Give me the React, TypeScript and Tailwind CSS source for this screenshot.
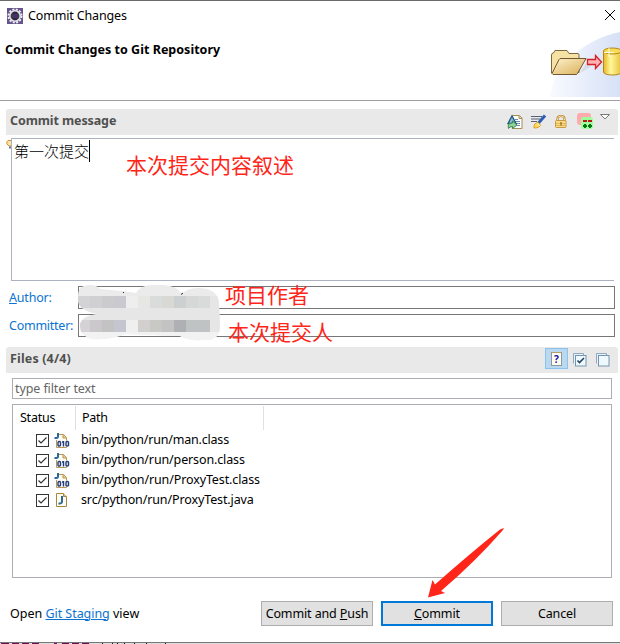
import React from 'react';

const ui = "font-['Noto_Sans','Noto_Sans_CJK_SC',sans-serif]";
const cjk = "font-['Noto_Sans_CJK_SC',sans-serif] font-light";
const note = "font-['Noto_Sans_CJK_SC',sans-serif] text-[21px] leading-[30px] text-[#ff2518]";

function Gear() {
  return (
    <svg width="16" height="16" viewBox="0 0 16 16">
      <rect width="16" height="16" fill="#65548c" />
      <circle cx="8" cy="8" r="6.5" fill="none" stroke="#eee" strokeWidth="2" strokeDasharray="2 1.4" />
      <circle cx="8" cy="8" r="5.2" fill="#302747" stroke="#e4e4e4" strokeWidth="1.6" />
      <path d="M4 7h8M4 9h8" stroke="#55496e" />
    </svg>
  );
}

function Banner() {
  return (
    <svg className="block" width="70" height="66" viewBox="550 31 70 66">
      <defs>
        <linearGradient id="sky" x1="0" y1="0" x2="1" y2="0"><stop stopColor="#f8faff" /><stop offset="1" stopColor="#d7e1f6" /></linearGradient>
        <linearGradient id="fold" x1="0" y1="0" x2="1" y2="1"><stop stopColor="#fff3cc" /><stop offset="1" stopColor="#d9ae59" /></linearGradient>
        <linearGradient id="cyl" x1="0" y1="0" x2="1" y2="0"><stop stopColor="#e9b824" /><stop offset=".4" stopColor="#fff79b" /><stop offset="1" stopColor="#e8c23a" /></linearGradient>
      </defs>
      <path d="M550 97C554 66 584 39 620 32V97Z" fill="url(#sky)" />
      <path d="M580 73l6-10 7-1q-2 6-13 11Z" fill="#d9dce6" />
      <path d="M551.5 73V55q0-2 2-2l1.500-2.500h12l2 3h9q1 0 1 2v17Z" fill="#f6e2a5" stroke="#7d6840" />
      <path d="M552 73.500L559 59.500q.5-1 2-1h25l-8.500 15q-.5 1-1.500 1h-23Z" fill="url(#fold)" stroke="#73572f" />
      <path d="M587.500 59.500h8v-4l6 6.500-6 6.500v-4h-8Z" fill="#ffb2b2" stroke="#d61f26" strokeWidth="1.300" />
      <path d="M603.500 51v21c0 4 18 4 18 0V51Z" fill="url(#cyl)" stroke="#b68516" />
      <ellipse cx="612.500" cy="51" rx="9" ry="3" fill="#f6dd55" stroke="#b68516" />
      <path d="M609 48v9M604 52.500h10" stroke="#fffde0" />
    </svg>
  );
}

function Amend() {
  return (
    <svg width="16" height="16" viewBox="0 0 16 16">
      <path d="M5.500 1.500h7l2.500 2.500v10.500h-9.500Z" fill="#fff" stroke="#a68d55" />
      <path d="M12 1.500v3h3" fill="#ead9a6" stroke="#a68d55" />
      <path d="M8 5.500h3M8 7.500h5M8 9.500h5M9 11.500h4" stroke="#668bb5" />
      <path d="M1 9.500L5 2l4 7.500Z" fill="#8fb9cf" stroke="#235b87" strokeWidth="1.400" />
      <path d="M1.500 14.500q-1.500-5.500 4-5.500V7L10 11l-4.500 3.500v-2q-3 0-4 2Z" fill="#92d39a" stroke="#3b8a50" />
    </svg>
  );
}
function SignOff() {
  return (
    <svg width="16" height="16" viewBox="0 0 16 16">
      <path d="M1 2.500h11M1 5h9M1 7.500h6" stroke="#566077" />
      <path d="M8.500 9L15 1.500" stroke="#2f5fb5" strokeWidth="3" />
      <path d="M4 14q-.5-5 4-5.500l2.500 2.500q-1 3-6.500 3Z" fill="#ffd957" stroke="#df9e22" />
      <path d="M7 9l3 3" stroke="#fff6c9" />
    </svg>
  );
}
function Lock() {
  return (
    <svg width="16" height="16" viewBox="0 0 16 16">
      <path d="M4.500 7V5q0-3 3.500-3t3.500 3v2" fill="none" stroke="#b58131" strokeWidth="2.200" />
      <path d="M4.500 7V5q0-3 3.500-3t3.500 3v2" fill="none" stroke="#f5dc91" strokeWidth="1" />
      <rect x="2.500" y="6.500" width="10.500" height="7" rx="1" fill="#fbdc85" stroke="#c79947" />
      <path d="M3 9.500h10M3 11.500h10" stroke="#e3b850" /><path d="M8 8v3.500" stroke="#70501c" />
    </svg>
  );
}
function ChangeId() {
  return (
    <svg width="18" height="18" viewBox="0 0 18 18">
      <rect x="1" y="0" width="14" height="12" rx="3" fill="#ffaaad" />
      <rect x="5" y="4" width="12" height="12" rx="3" fill="#9cff9b" />
      <path d="M7 8h4M12 8h4" stroke="#b81818" strokeWidth="2" />
      <path d="M7 13h4M12 13h4M9 11v4M14 11v4" stroke="#087411" strokeWidth="2" />
    </svg>
  );
}

function Check() {
  return (
    <svg className="block" width="13" height="13" viewBox="0 0 13 13">
      <rect x=".5" y=".5" width="12" height="12" fill="#fff" stroke="#333" />
      <path d="M2.500 6.500l2.500 2.500 5.500-5.500" fill="none" stroke="#333" strokeWidth="1.200" />
    </svg>
  );
}

function FileIcon({ java }: { java?: boolean }) {
  return java ? (
    <svg className="block" width="16" height="16" viewBox="0 0 16 16">
      <path d="M2.500 .5h7l3 3v10h-10Z" fill="#fffdf0" stroke="#a98742" /><path d="M9.500 .5v3h3" fill="#e6cd8a" stroke="#a98742" />
      <path d="M8 3v5.500q0 2.500-3.500 2" fill="none" stroke="#28699c" strokeWidth="2" />
    </svg>
  ) : (
    <svg className="block" width="16" height="16" viewBox="0 0 16 16">
      <path d="M4 1.500h5.500l3 3V14.500h-10V7" fill="#fffdf0" stroke="#b8965a" /><path d="M9 1.500v3.500h3.500" fill="#e6cd8a" stroke="#b8965a" />
      <path d="M4 0v3.500q0 2-3.500 1.500" fill="none" stroke="#28699c" strokeWidth="2" />
      <path d="M3.500 7.500H16v6H3.500Z" fill="#f3f5fa" />
      <rect x="4" y="8.500" width="2.500" height="4.500" rx="1" fill="none" stroke="#263e76" strokeWidth="1.400" />
      <path d="M8 9h1.500M9.500 8v5.500" fill="none" stroke="#263e76" strokeWidth="1.400" />
      <rect x="12" y="8.500" width="2.500" height="4.500" rx="1" fill="none" stroke="#263e76" strokeWidth="1.400" />
    </svg>
  );
}

function Boxes({ checked }: { checked?: boolean }) {
  return (
    <svg className="block" width="14" height="14" viewBox="0 0 14 14">
      <path d="M.5 10.500V.5h10v2" fill="none" stroke="#91a8bd" /><path d="M1 1h9v1H2v8H1Z" fill="#e5f5ff" />
      <rect x="2.500" y="2.500" width="10.500" height="10.500" fill="#edf9ff" stroke="#7894ab" />
      {checked && <path d="M4.500 7.500l2 2L11 5" fill="none" stroke="#234568" strokeWidth="1.600" />}
    </svg>
  );
}

function Redaction() {
  const top = ['#d3d2d4', '#d0cfd1', '#cbcacd', '#c9c9cf', '#eeeeee', '#e6e7e4', '#dadbdb', '#d8d9d4', '#cdd0d1', '#d6d8d8', '#d9dbda', '#e6e6e6'];
  const low = ['#d4d2d4', '#cac8ca', '#c4c3c3', '#c5c5cf', '#efefef', '#d1d0ce', '#c8c8c5', '#c3c3c3', '#aeb0b3', '#c0c3c4', '#bfc3c3', '#e6e6e6'];
  return (
    <svg className="block" width="144" height="60" viewBox="77 284 144 60">
      <defs><clipPath id="smudge"><path d="M78 296Q78 285 90 285Q97 285 100 289L122 291L136 293Q141 285 152 285H164Q177 286 182 294Q187 288 198 288Q219 288 219 305L220 326Q220 341 204 340Q188 341 180 336L125 334Q112 340 92 339Q80 336 80 326Q80 316 98 314Q78 310 78 300Z" /></clipPath></defs>
      <g clipPath="url(#smudge)">
        <rect x="77" y="284" width="144" height="60" fill="#ebebeb" />
        <rect x="77" y="308" width="144" height="12" fill="#e6e6e6" />
        <rect x="77" y="332" width="144" height="12" fill="#f2f2f2" />
        {top.map((c, i) => <rect key={i} x={78 + i * 12} y="296" width="12" height="12" fill={c} />)}
        {low.map((c, i) => <rect key={i} x={78 + i * 12} y="320" width="12" height="12" fill={c} />)}
      </g>
      <path d="M181 294.500l2-1.500M123 292.500h1" stroke="#222" />
    </svg>
  );
}

const files = [
  ['bin/python/run/man.class', 'tracking-[-0.19px]'],
  ['bin/python/run/person.class', 'tracking-[-0.13px]'],
  ['bin/python/run/ProxyTest.class', 'tracking-[-0.12px]'],
  ['src/python/run/ProxyTest.java', 'tracking-[-0.12px]'],
];

export default function App() {
  return (
    <div className={`relative flex h-[644px] w-[620px] flex-col overflow-hidden bg-white text-[12.5px] leading-[20px] text-black ${ui}`}>
      <header className="h-[101px] shrink-0 border-y border-t-[#6b6b6b] border-b-[#a0a0a0]">
        <div className="flex h-[30px] items-center pl-[7px] pr-[5px]">
          <Gear />
          <span className="ml-[5px] tracking-[-0.15px]">Commit Changes</span>
          <svg className="-mt-[2px] ml-auto" width="10" height="10" viewBox="0 0 10 10"><path d="M0 0L10 10M10 0L0 10" stroke="#000" /></svg>
        </div>
        <div className="flex justify-between pl-[5px]">
          <h1 className="mt-[9px] font-bold tracking-[0.02px]">Commit Changes to Git Repository</h1>
          <Banner />
        </div>
      </header>

      <div className="ml-[6px] mr-[2px] mt-[8px] flex h-[26px] shrink-0 items-center rounded-t-[3px] bg-[#e9e9e9] pl-[4px] pr-[8px]">
        <h2 className="-mt-[2px] font-bold tracking-[-0.1px] text-[#505050]">Commit message</h2>
        <div className="ml-auto flex items-center gap-[7px]">
          <Amend /><SignOff /><Lock /><ChangeId />
          <svg className="-ml-px -mt-[11px]" width="10" height="6" viewBox="0 0 10 6"><path d="M.5 .5h9L5 5Z" fill="#fff" stroke="#777" /></svg>
        </div>
      </div>

      <div className="mt-[3px] flex h-[143px] shrink-0 pl-[6px] pr-[6px]">
        <svg className="mt-[2px] block" width="5" height="9" viewBox="0 0 5 9"><path d="M5 .5H2Q0 2 1 4l2 2h2" fill="#ffe4a3" stroke="#d88a25" /><path d="M3 7.500h2" stroke="#687b94" strokeWidth="2" /></svg>
        <div className="relative flex-1 border border-r-0 border-[#abb3bf]">
          <div className={`flex h-[24px] items-center pl-[2px] text-[15px] ${cjk}`}><span className="-mt-px">第一次提交</span><span className="h-[22px] w-px bg-black" /></div>
          <span className={`absolute left-[114px] top-[10px] ${note}`}>本次提交内容叙述</span>
        </div>
      </div>

      <div className="relative mt-[5px] flex h-[51px] shrink-0 flex-col gap-[5px] pl-[9px] pr-[5px]">
        <div className="flex h-[23px]"><label className="mt-[2px] w-[69px] tracking-[-0.2px] text-[#0b73d1]"><u>A</u>uthor:</label><div className="flex-1 border border-[#777]" /></div>
        <div className="flex h-[23px]"><label className="mt-[2px] w-[69px] tracking-[-0.25px] text-[#0b73d1]">Committer:</label><div className="flex-1 border border-[#777]" /></div>
        <div className="absolute -top-[2px] left-[77px]"><Redaction /></div>
        <span className={`absolute left-[225px] -top-[7px] ${note}`}>项目作者</span>
        <span className={`absolute left-[228px] top-[30px] ${note}`}>本次提交人</span>
      </div>

      <div className="ml-[6px] mr-[2px] mt-[10px] flex h-[26px] shrink-0 items-center rounded-t-[3px] bg-[#e9e9e9] pl-[4px] pr-[8px]">
        <h2 className="-mt-[2px] font-bold tracking-[0.15px] text-[#505050]">Files (4/4)</h2>
        <div className="ml-auto flex items-center">
          <div className="-mt-[3px] flex h-[21px] w-[23px] items-center justify-center border border-[#8bc3ee] bg-[#bad8f0]">
            <div className="flex h-[14px] w-[11px] items-center justify-center border border-[#8b99a5] border-t-[#b79e62] bg-[#fffdf0] text-[10px] font-bold text-[#160cae]">?</div>
          </div>
          <span className="ml-[5px]"><Boxes checked /></span><span className="ml-[9px]"><Boxes /></span>
        </div>
      </div>

      <div className="ml-[12px] mr-[8px] mt-[5px] flex h-[21px] shrink-0 items-center border border-[#abadb3] pl-[2px] tracking-[-0.1px] text-[#666]">type filter text</div>

      <div className="ml-[12px] mr-[8px] mt-[5px] h-[174px] shrink-0 border border-[#abadb3]">
        <div className="mt-px flex h-[24px] items-center">
          <div className="flex h-full w-[63px] items-center border-r border-[#e0e0e0] pl-[7px] tracking-[-0.25px]">Status</div>
          <div className="flex h-full w-[188px] items-center border-r border-[#e0e0e0] pl-[6px] tracking-[-0.25px]">Path</div>
        </div>
        {files.map(([name, spacing], i) => (
          <div key={name} className="flex h-[20px] items-center pl-[23px]">
            <Check /><span className="ml-[5px] mt-px"><FileIcon java={i === 3} /></span><span className={`ml-[11px] ${spacing}`}>{name}</span>
          </div>
        ))}
      </div>

      <footer className="mt-[23px] flex h-[25px] shrink-0 items-center pl-[10px] pr-[7px]">
        <span>Open <u className="tracking-[-0.05px] text-[#0b73d1]">Git Staging</u> view</span>
        <div className="ml-auto flex gap-[8px] tracking-[-0.12px]">
          <button className="h-[25px] w-[112px] border border-[#adadad] bg-[#e1e1e1]">Commit and <u>P</u>ush</button>
          <button className="h-[25px] w-[112px] border-2 border-[#0078d7] bg-[#e1e1e1]"><u>C</u>ommit</button>
          <button className="h-[25px] w-[112px] border border-[#adadad] bg-[#e1e1e1]">Cancel</button>
        </div>
      </footer>

      {/* sliver of the editor window behind the dialog */}
      <div className="mt-[16px] h-[2px] w-full shrink-0 border-t border-[#777] bg-[#dcdcdc]">
        <svg className="block" width="180" height="1" viewBox="0 0 180 1">
          <path d="M1 .5h8M12 .5h7M22 .5h7M32 .5h7M54 .5h3M62 .5h7M72 .5h7M82 .5h7" stroke="#6b0f4e" />
          <path d="M102 .5h1M112 .5h1M117 .5h1M124 .5h1M134 .5h1M146 .5h1M165 .5h1" stroke="#111" strokeWidth="1" />
        </svg>
      </div>
      <svg className="absolute left-[427px] top-[526px]" width="78" height="72" viewBox="427 526 78 72">
        <path d="M428 597.500L432.500 580l2.500 4.500q35-31 65-55l4-1.500-1 2q-28 32-62 61l4 2Z" fill="#ff2518" />
      </svg>
    </div>
  );
}
